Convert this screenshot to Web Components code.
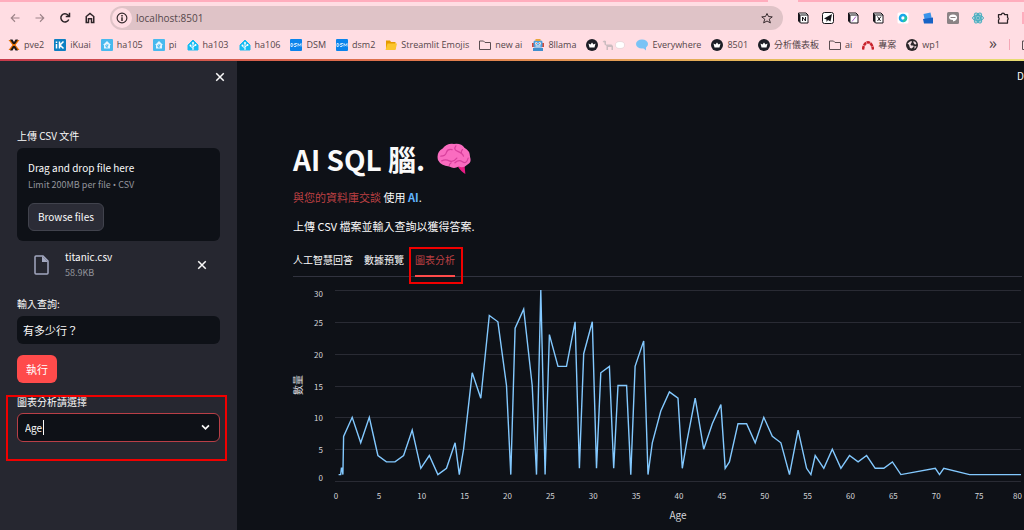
<!DOCTYPE html>
<html lang="zh-Hant">
<head>
<meta charset="utf-8">
<meta name="viewport" content="width=device-width, initial-scale=1">
<title>AI SQL</title>
<style>
  body {
    margin: 0;
    min-height: 100vh;
    display: flex;
    flex-direction: column;
    overflow: hidden;
    background: #0e1117;
    color: #fafafa;
    font: 11px/16px "Noto Sans CJK TC", sans-serif;
  }
  .app { display: flex; flex: 1; }
</style>
</head>
<body>
<browser-bar></browser-bar>
<div class="app">
  <side-bar>
    <file-uploader label="上傳 CSV 文件"></file-uploader>
    <text-field label="輸入查詢:" value="有多少行？"></text-field>
    <primary-button>執行</primary-button>
    <select-field label="圖表分析請選擇" value="Age"></select-field>
  </side-bar>
  <main-view>
    <tab-list slot="tabs">
      <tab-item>人工智慧回答</tab-item>
      <tab-item>數據預覽</tab-item>
      <tab-item selected>圖表分析</tab-item>
    </tab-list>
    <line-chart slot="chart" x-title="Age" y-title="數量"></line-chart>
  </main-view>
</div>

<script>
const svg = (box, body) => `<svg viewBox="0 0 ${box} ${box}" aria-hidden="true">${body}</svg>`;
const stroke = (d, w = 2) => `<path d="${d}" fill="none" stroke="currentColor" stroke-width="${w}"/>`;

const CROSS = svg(16, stroke('M3 3l10 10M13 3L3 13', 2));

const house = (bg, fg) => svg(24, `<path d="M12 2l10 10v10H2V12z" fill="${bg}" stroke="${bg}" stroke-width="2" stroke-linejoin="round"/>
  <path d="M12 22V9M12 19l-5-5M12 16l5-4" stroke="${fg}" stroke-width="2" fill="none"/>
  <circle cx="12" cy="8" r="2" fill="${fg}"/><circle cx="7" cy="13" r="2" fill="${fg}"/><circle cx="17" cy="12" r="2" fill="${fg}"/>`);
const dsm = svg(24, `<rect width="24" height="24" rx="2" fill="#0a84ec"/>
  <path d="M2 9v6h2q2 0 2-3t-2-3zM14 9h-4q-2 0-1 2l3 1q2 1 0 3H8M16 15V9l3 4 3-4v6" fill="none" stroke="#fff" stroke-width="1.5"/>`);
const folder = svg(24, '<path d="M1 4h8l3 3h11v14H1z" fill="none" stroke="#5c4e52" stroke-width="2" stroke-linejoin="round"/>');
const crown = svg(24, `<circle cx="12" cy="12" r="12" fill="#1c1e26"/><path d="M5 9l4 2 3-4 3 4 4-2-2 8H7z" fill="#fff"/>`);
const haTile = svg(24, `<rect width="24" height="24" rx="2" fill="#48b9ee"/>
  <path d="M12 4l8 8h-2v7H6v-7H4z" fill="#e4f6ff"/><path d="M12 18v-8M12 16l-4-3M12 14l3-2" stroke="#48b9ee" stroke-width="2" fill="none"/>`);
const haHouse = house('#18bcf2', '#fff');

const BOOKMARKS = [
  ['pve2', svg(24, '<path d="M1 2h6l5 6 5-6h6l-8 10 8 10h-6l-5-6-5 6H1l8-10z" fill="#e57000"/><path d="M4 1h5l3 5 3-5h5l-6 9h-4zM4 23h5l3-5 3 5h5l-6-9h-4z" fill="#1b1718"/>')],
  ['iKuai', svg(24, '<rect width="24" height="24" rx="2" fill="#0e7fc2"/><path d="M5 10v9M5 5v3M11 5v14M19 5l-7 7 7 7" stroke="#fff" stroke-width="3" fill="none"/>')],
  ['ha105', haTile],
  ['pi', haTile],
  ['ha103', haHouse],
  ['ha106', haHouse],
  ['DSM', dsm],
  ['dsm2', dsm],
  ['Streamlit Emojis', svg(24, '<path d="M2 3h8l2 3h9v14H2z" fill="#e59b00"/><path d="M5 9h19l-3 13H1z" fill="#fcc52e"/>')],
  ['new ai', folder],
  ['8llama', svg(24, '<path d="M0 8h24v8H0z" fill="#d44a38"/><rect x="3" y="3" width="18" height="14" rx="3" fill="#4c9ddb"/><path d="M7 0h10v4H7z" fill="#e8a63a"/><path d="M2 18h20v6H2z" fill="#3e8fce"/><circle cx="8.500" cy="9" r="2.500" fill="#fff"/><circle cx="15.500" cy="9" r="2.500" fill="#fff"/><circle cx="8.500" cy="9" r="1" fill="#c33"/><circle cx="15.500" cy="9" r="1" fill="#c33"/><path d="M7 14h10" stroke="#fff" stroke-width="2"/>')],
  ['', crown, 'llama'],
  ['Everywhere', svg(24, '<ellipse cx="12" cy="10" rx="12" ry="9" fill="#79c3f5"/><path d="M12 16l8 0v7z" fill="#79c3f5"/>')],
  ['8501', crown],
  ['分析儀表板', crown],
  ['ai', folder],
  ['專案', svg(24, '<path d="M2 21C4 2 20 2 22 21" fill="none" stroke="#c8202a" stroke-width="5" stroke-dasharray="7 1"/>')],
  ['wp1', svg(24, '<circle cx="12" cy="12" r="12" fill="#2c282b"/><path d="M3 9q6-6 8-5t-1 5 3 4-2 6q-4 0-4-4T3 9zM15 4q5 1 6 6-3 2-5-1t-1-5zM17 14l4 1-4 5z" fill="#f6dfe3"/>')]
];

const LLAMA = `<svg class="wide" viewBox="0 0 48 24" aria-hidden="true">
  <path d="M4 3l4 1v7h11l3 3v8h-3v-6h-7v6H9v-8L5 11V7L1 6z" fill="#cbbcc0"/>
  <ellipse cx="36" cy="12" rx="9" ry="7" fill="#fff" stroke="#d9c6ca"/></svg>`;

const book = (mark) => svg(24, `<path d="M3 2h15l4 4v16H7l-4-4z" fill="#fff" stroke="#17151a" stroke-width="2"/><path d="M3 2v16l4 4V6z" fill="#17151a"/><path d="M7 6h15" stroke="#17151a" stroke-width="2"/>${mark}`);
const EXTENSIONS = [
  ['Notion', book('<path d="M11 18v-8l6 8v-8" stroke="#17151a" stroke-width="2" fill="none"/>')],
  ['Send', svg(24, '<rect x="1" y="1" width="22" height="22" rx="4" fill="#fff" stroke="#17151a" stroke-width="2"/><path d="M4 13L20 4l-3 15-5-3-3 4v-5z" fill="#17151a"/>')],
  ['Notes', book('<path d="M10 19l8-10" stroke="#a65cc8" stroke-width="2"/>')],
  ['Clipper', book('<path d="M11 9l6 9M18 9l-7 9" stroke="#17151a" stroke-width="2"/>')],
  ['Capture', svg(24, '<rect x="1" y="1" width="22" height="22" rx="3" fill="#fff"/><circle cx="12" cy="12" r="6" fill="none" stroke="#18a7e8" stroke-width="5"/><path d="M17 9a6 6 0 0 1-5 9" fill="none" stroke="#28c8a0" stroke-width="5"/>')],
  ['Files', svg(24, '<path d="M3 4l14-3 3 14-14 4z" fill="#3b94ea"/><path d="M2 14l20-3v12H4z" fill="#1763c5"/>')],
  ['Line', svg(24, '<rect width="24" height="24" rx="3" fill="#8b8385"/><path d="M12 5c11 0 11 12 0 14v-3C1 16 2 5 12 5z" fill="#fff"/><path d="M7 11h10" stroke="#8b8385" stroke-width="2"/>')],
  ['React', svg(24, '<circle cx="12" cy="12" r="9" fill="#a9cfd8"/><g fill="none" stroke="#4aaec0" stroke-width="2"><ellipse cx="12" cy="12" rx="11" ry="5"/><ellipse cx="12" cy="12" rx="11" ry="5" transform="rotate(60 12 12)"/><ellipse cx="12" cy="12" rx="11" ry="5" transform="rotate(120 12 12)"/></g><circle cx="12" cy="12" r="3" fill="#4aaec0"/>')],
  ['Extensions', svg(24, '<path d="M3 5h6a3 3 0 0 1 6 0h6v6a3 3 0 0 1 0 5v6H3v-6a3 3 0 0 0 0-5z" fill="none" stroke="#2a2226" stroke-width="2.500" stroke-linejoin="round"/>')]
];

class BrowserBar extends HTMLElement {
  connectedCallback() {
    if (this.shadowRoot) return;
    this.attachShadow({ mode: 'open' }).innerHTML = `
      <style>
        :host {
          display: block;
          overflow: hidden;
          background: #ffdde3;
          color: #544549;
          font: 9px/12px "Open Sans", "Noto Sans CJK TC", sans-serif;
        }
        .tabs { display: flex; height: 2px; }
        .tabs span { background: #ffadbd; flex: 1; }
        .tabs span:first-child { flex: 0 1 75%; margin-right: 30px; }
        .row { display: flex; align-items: center; }
        .nav { height: 32px; padding-left: 9px; }
        button { border: 0; padding: 0; margin: 0; background: none; color: inherit; font: inherit; display: flex; flex: none; }
        svg { display: block; width: 12px; height: 12px; flex: none; }
        .steer { gap: 13px; flex: none; }
        .steer button { color: #2d2428; }
        .steer .dim { color: #9d8489; }
        .address {
          flex: 1;
          min-width: 0;
          height: 24px;
          margin: 0 9px 0 14px;
          padding: 0 10px 0 2px;
          border-radius: 12px;
          background: #dfc3c7;
          color: #33282b;
        }
        .info { padding: 4px; border-radius: 50%; background: #ffdde3; }
        input { flex: 1; min-width: 0; border: 0; padding: 0 0 0 4px; background: none; color: #56484c; font: 10px/16px "Open Sans", sans-serif; outline: 0; }
        .ext { gap: 13px; padding: 0 8px 0 5px; flex: none; }
        .ext button { width: 12px; }
        .edge { width: 2px; height: 12px; background: #ffadbd; margin-left: 5px; }
        .marks { box-sizing: border-box; height: 25px; padding: 0 0 4px 8px; }
        nav { gap: 10px; flex: 1; min-width: 0; overflow: hidden; }
        a { display: flex; align-items: center; gap: 4px; color: inherit; text-decoration: none; white-space: nowrap; flex: none; }
        .wide { width: 24px; }
        .more { font-size: 16px; line-height: 16px; padding-bottom: 3px; margin-right: 12px; }
        .rule { width: 1px; height: 11px; background: #f5a8b7; margin-right: 12px; }
        .all { width: 2px; overflow: hidden; }
        .line { height: 2px; background: linear-gradient(90deg, #c73b4c, #e0764c 40%, #e6c45d 80%, #e7dc72); }
      </style>
      <div class="tabs"><span></span><span></span></div>
      <div class="row nav">
        <div class="row steer">
          <button class="dim" aria-label="Back">${svg(16, stroke('M14 8H3M8 3L3 8l5 5', 1.5))}</button>
          <button class="dim" aria-label="Forward">${svg(16, stroke('M2 8h11M8 3l5 5-5 5', 1.5))}</button>
          <button aria-label="Reload">${svg(16, stroke('M13 10a5.500 5.500 0 1 1-1-6l2 2M14 1v5H9'))}</button>
          <button aria-label="Home">${svg(16, stroke('M3 14V6l5-4 5 4v8h-3v-5H6v5z'))}</button>
        </div>
        <div class="row address">
          <button class="info" aria-label="Site information">${svg(16, stroke('M8 7v5M8 4v2') + '<circle cx="8" cy="8" r="6.500" fill="none" stroke="currentColor" stroke-width="1.500"/>')}</button>
          <input aria-label="Address" value="localhost:8501">
          <button aria-label="Bookmark">${svg(16, '<path d="M8 2l2 4 5 .5-4 3 1.500 5L8 12l-4.500 2.500L5 9.500l-4-3L6 6z" fill="none" stroke="currentColor" stroke-width="1.300" stroke-linejoin="round"/>')}</button>
        </div>
        <div class="row ext">${EXTENSIONS.map(([name, icon]) => `<button aria-label="${name}">${icon}</button>`).join('')}</div>
        <div class="edge"></div>
      </div>
      <div class="row marks">
        <nav class="row" aria-label="Bookmarks">
          ${BOOKMARKS.map(([text, icon, extra]) => `<a href="#"${extra ? ` aria-label="${extra}"` : ''}>${icon}${extra ? LLAMA : `<span>${text}</span>`}</a>`).join('')}
        </nav>
        <button class="more" aria-label="More bookmarks">»</button>
        <span class="rule"></span>
        <button class="all" aria-label="All bookmarks">${folder}</button>
      </div>
      <div class="line"></div>
    `;
  }
}

class SideBar extends HTMLElement {
  connectedCallback() {
    if (this.shadowRoot) return;
    this.attachShadow({ mode: 'open' }).innerHTML = `
      <style>
        :host {
          display: flex;
          flex-direction: column;
          flex: 0 0 237px;
          box-sizing: border-box;
          padding: 10px 17px;
          background: #262730;
        }
        .close { align-self: flex-end; width: 12px; height: 12px; border: 0; padding: 0; margin: 0 -6px 45px 0; background: none; color: #fafafa; }
        svg { display: block; }
      </style>
      <button class="close" aria-label="Close sidebar">${CROSS}</button>
      <slot></slot>
    `;
  }
}

class FileUploader extends HTMLElement {
  connectedCallback() {
    if (this.shadowRoot) return;
    this.attachShadow({ mode: 'open' }).innerHTML = `
      <style>
        :host { display: block; margin-bottom: 16px; font-size: 10px; }
        .label { margin-bottom: 4px; }
        .drop { padding: 12px 11px 10px; border-radius: 6px; background: #0e1117; }
        .hint { font-size: 9px; line-height: 18px; color: #93959c; }
        .dot { font-family: "Open Sans", sans-serif; }
        button { font: inherit; color: inherit; }
        .browse { height: 28px; padding: 0 9px; margin-top: 9px; border: 1px solid #41434d; border-radius: 6px; background: #2b2c36; }
        .file { display: flex; align-items: center; padding: 8px 12px 0 14px; }
        .file > svg { width: 20px; height: 20px; margin-right: 14px; color: #a3a8c0; }
        .name { flex: 1; }
        .size { font-size: 9px; line-height: 15px; color: #93959c; }
        .remove { width: 12px; height: 12px; padding: 0; border: 0; background: none; }
        .remove svg { display: block; }
      </style>
      <div class="label" id="label">${this.getAttribute('label')}</div>
      <section class="drop" aria-labelledby="label">
        <div>Drag and drop file here</div>
        <div class="hint">Limit 200MB per file <span class="dot">•</span> CSV</div>
        <button class="browse">Browse files</button>
      </section>
      <div class="file">
        ${svg(20, '<path d="M5 1h7l5 5v12q0 1-1 1H5q-1 0-1-1V2q0-1 1-1z" fill="none" stroke="currentColor" stroke-width="1.500"/><path d="M11 1v6h6z" fill="currentColor"/>')}
        <div class="name"><div>titanic.csv</div><div class="size">58.9KB</div></div>
        <button class="remove" aria-label="Remove file">${CROSS}</button>
      </div>
    `;
  }
}

class TextField extends HTMLElement {
  connectedCallback() {
    if (this.shadowRoot) return;
    this.attachShadow({ mode: 'open' }).innerHTML = `
      <style>
        :host { display: block; margin-bottom: 11px; }
        label { display: block; font-size: 10px; margin-bottom: 4px; }
        input {
          display: block;
          box-sizing: border-box;
          width: 100%;
          height: 28px;
          padding: 0 6px;
          border: 0;
          border-radius: 6px;
          background: #0e1117;
          color: inherit;
          font: inherit;
        }
      </style>
      <label for="field">${this.getAttribute('label')}</label>
      <input id="field" value="${this.getAttribute('value')}">
    `;
  }
}

class PrimaryButton extends HTMLElement {
  connectedCallback() {
    if (this.shadowRoot) return;
    this.attachShadow({ mode: 'open' }).innerHTML = `
      <style>
        :host { display: flex; margin-bottom: 11px; }
        button { height: 28px; padding: 0 9px; border: 0; border-radius: 6px; background: #ff4b4b; color: #fff; font: inherit; }
      </style>
      <button><slot></slot></button>
    `;
  }
}

class SelectField extends HTMLElement {
  connectedCallback() {
    if (this.shadowRoot) return;
    this.attachShadow({ mode: 'open' }).innerHTML = `
      <style>
        :host { display: block; position: relative; }
        label { display: block; font-size: 10px; margin-bottom: 3px; }
        .box { position: relative; }
        select {
          appearance: none;
          display: block;
          box-sizing: border-box;
          width: 100%;
          height: 29px;
          padding: 0 7px;
          border: 1px solid #b93f47;
          border-radius: 6px;
          background: #0e1117;
          color: inherit;
          font: inherit;
          font-size: 10px;
        }
        .box svg { position: absolute; right: 9px; top: 9px; width: 11px; height: 11px; }
        .caret { position: absolute; left: 26px; top: 7px; width: 1px; height: 15px; background: #fafafa; }
        /* highlight frame around the whole field */
        .mark { position: absolute; inset: 1px -7px -19px -11px; border: 2px solid #f00000; pointer-events: none; }
      </style>
      <label for="field">${this.getAttribute('label')}</label>
      <div class="box">
        <select id="field"><option>${this.getAttribute('value')}</option></select>
        <span class="caret"></span>
        ${svg(16, stroke('M3 5l5 5 5-5', 2.5))}
      </div>
      <div class="mark"></div>
    `;
  }
}

class MainView extends HTMLElement {
  connectedCallback() {
    if (this.shadowRoot) return;
    this.attachShadow({ mode: 'open' }).innerHTML = `
      <style>
        :host { display: block; flex: 1; min-width: 0; }
        header { display: flex; justify-content: flex-end; height: 30px; }
        header button { border: 0; padding: 0; background: none; color: inherit; font: 10px/16px "Noto Sans CJK TC", sans-serif; }
        main { padding: 45px 0 0 56px; }
        h1 { display: flex; align-items: center; gap: 12px; margin: 0 0 7px; font-size: 28px; line-height: 46px; font-weight: 700; }
        h1 svg { width: 34px; height: 34px; }
        p { margin: 0 0 13px; }
        .red { color: #bd4043; }
        strong { color: #60b4ff; }
      </style>
      <header><button aria-label="Deploy">D</button></header>
      <main>
        <h1>AI SQL 腦. ${svg(36, `
          <path d="M22 26q4 6 8 8l-1-11z" fill="#ea1c86"/>
          <path d="M1 19Q-1 11 6 7 10 1 18 2q8-1 11 4 6 3 6 10 2 6-3 8-4 4-9 2-5 3-10 0-9-1-12-7z" fill="#fa6cc0"/>
          <g fill="none" stroke="#d8409c" stroke-width="1.300" stroke-linecap="round">
            <path d="M4 15q5 0 6-4t6-3M20 4q-3 4 2 6t6 5M27 8q-2 2-1 4M5 20q4-2 8 0t8-3M19 22q4-4 8-1t6-4M13 25q0-2 2-3"/>
          </g>`)}</h1>
        <p><span class="red">與您的資料庫交談</span> 使用 <strong>AI</strong>.</p>
        <p>上傳 CSV 檔案並輸入查詢以獲得答案.</p>
        <slot name="tabs"></slot>
        <slot name="chart"></slot>
      </main>
    `;
  }
}

class TabList extends HTMLElement {
  connectedCallback() {
    if (this.shadowRoot) return;
    this.setAttribute('role', 'tablist');
    this.attachShadow({ mode: 'open' }).innerHTML = `
      <style>
        :host { display: flex; gap: 11px; margin-right: 2px; padding-top: 2px; box-shadow: inset 0 -1px #31333f; }
      </style>
      <slot></slot>
    `;
  }
}

class TabItem extends HTMLElement {
  connectedCallback() {
    if (this.shadowRoot) return;
    this.attachShadow({ mode: 'open' }).innerHTML = `
      <style>
        :host { display: block; position: relative; }
        button { display: block; height: 28px; padding: 0 0 4px; border: 0; border-bottom: 2px solid transparent; background: none; color: inherit; font: 10px/16px "Noto Sans CJK TC", sans-serif; }
        :host([selected]) button { color: #bd4043; border-color: #ff4b4b; }
        .mark { display: none; position: absolute; inset: -2px -8px -7px -6px; border: 2px solid #f00000; pointer-events: none; }
        :host([selected]) .mark { display: block; }
      </style>
      <button role="tab" aria-selected="${this.hasAttribute('selected')}"><slot></slot></button>
      <div class="mark"></div>
    `;
  }
}

// passengers per age
const AGES = [
  [0.42, 1], [0.67, 1], [0.75, 2], [0.83, 2], [0.92, 1], [1, 7], [2, 10], [3, 6], [4, 10], [5, 4],
  [6, 3], [7, 3], [8, 4], [9, 8], [10, 2], [11, 4], [12, 1], [13, 2], [14, 6], [14.5, 1],
  [15, 5], [16, 17], [17, 13], [18, 26], [19, 25], [20, 15], [20.5, 1], [21, 24], [22, 27], [23, 15],
  [23.5, 1], [24, 30], [24.5, 1], [25, 23], [26, 18], [27, 18], [28, 25], [28.5, 2], [29, 20], [30, 25],
  [30.5, 2], [31, 17], [32, 18], [32.5, 2], [33, 15], [34, 15], [34.5, 1], [35, 18], [36, 22], [36.5, 1],
  [37, 6], [38, 11], [39, 14], [40, 13], [40.5, 2], [41, 6], [42, 13], [43, 5], [44, 9], [45, 12],
  [45.5, 2], [46, 3], [47, 9], [48, 9], [49, 6], [50, 10], [51, 7], [52, 6], [53, 1], [54, 8],
  [55, 2], [55.5, 1], [56, 4], [57, 2], [58, 5], [59, 2], [60, 4], [61, 3], [62, 4], [63, 2],
  [64, 2], [65, 3], [66, 1], [70, 2], [70.5, 1], [71, 2], [74, 1], [80, 1]
];

class LineChart extends HTMLElement {
  connectedCallback() {
    if (this.shadowRoot) return;
    this.attachShadow({ mode: 'open' }).innerHTML = `
      <style>
        :host { display: block; height: 248px; margin-top: 3px; }
        svg { display: block; width: 100%; height: 100%; overflow: visible; }
        text { fill: #d5d6da; font-size: 8px; }
        .title { font-size: 10px; }
        .grid { stroke: #292b34; stroke-width: 1; }
        .series { fill: none; stroke: #83c9ff; stroke-width: 1.4; stroke-linejoin: miter; }
      </style>
      <svg role="img" aria-label="${this.getAttribute('y-title')} / ${this.getAttribute('x-title')}"></svg>
    `;
    this._observer = new ResizeObserver(() => this.draw());
    this._observer.observe(this);
    this.draw();
  }

  disconnectedCallback() {
    this._observer.disconnect();
  }

  draw() {
    const width = this.clientWidth;
    const left = 42;
    const right = width - 3;
    const top = 10;
    const bottom = 201;
    const x = (v) => left + (v / 80) * (right - left);
    const y = (v) => bottom - (v / 30) * (bottom - top);
    let out = '';
    for (let v = 0; v <= 30; v += 5) {
      const gy = Math.round(y(v)) + 0.5;
      // end labels stay inside the plot
      const ty = gy + (v === 0 ? -1 : v === 30 ? 6 : 3);
      out += `<line class="grid" x1="${left}" x2="${right}" y1="${gy}" y2="${gy}"/>`;
      out += `<text x="30" y="${ty}" text-anchor="end">${v}</text>`;
    }
    for (let v = 0; v <= 80; v += 5) {
      out += `<text x="${v === 80 ? right + 1 : x(v) + 1}" y="219" text-anchor="${v === 80 ? 'end' : 'middle'}">${v}</text>`;
    }
    out += `<path class="series" d="M${AGES.map(([a, n]) => `${x(a).toFixed(1)} ${y(n).toFixed(1)}`).join('L')}"/>`;
    out += `<text class="title" x="${(left + right) / 2}" y="239" text-anchor="middle">${this.getAttribute('x-title')}</text>`;
    out += `<text class="title" transform="translate(9 105) rotate(-90)" text-anchor="middle">${this.getAttribute('y-title')}</text>`;
    this.shadowRoot.querySelector('svg').innerHTML = out;
  }
}

customElements.define('browser-bar', BrowserBar);
customElements.define('side-bar', SideBar);
customElements.define('file-uploader', FileUploader);
customElements.define('text-field', TextField);
customElements.define('primary-button', PrimaryButton);
customElements.define('select-field', SelectField);
customElements.define('main-view', MainView);
customElements.define('tab-list', TabList);
customElements.define('tab-item', TabItem);
customElements.define('line-chart', LineChart);
</script>
</body>
</html>
